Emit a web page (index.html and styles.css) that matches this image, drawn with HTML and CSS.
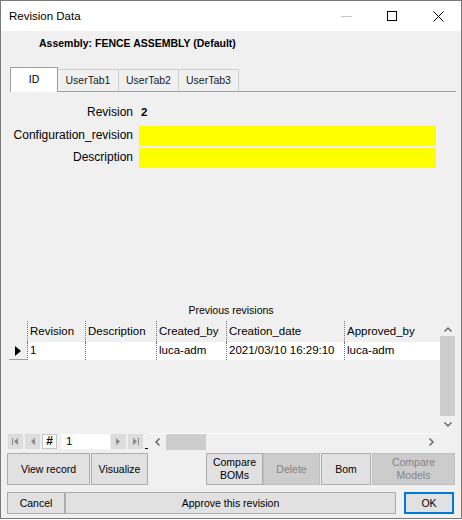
FILE: index.html
```html
<!DOCTYPE html>
<html>
<head>
<meta charset="utf-8">
<title>Revision Data</title>
<link rel="stylesheet" href="styles.css">
</head>
<body>
<div class="window">
  <div class="titlebar">
    <div class="title">Revision Data</div>
    <div class="controls">
      <div class="ctl"><svg width="11" height="10" viewBox="0 0 11 10"><line x1="0" y1="5.5" x2="11" y2="5.5" stroke="#c8c8c8" stroke-width="1"/></svg></div>
      <div class="ctl"><svg width="10" height="10" viewBox="0 0 10 10"><rect x="0.5" y="0.5" width="9" height="9" fill="none" stroke="#000" stroke-width="1"/></svg></div>
      <div class="ctl"><svg width="11" height="11" viewBox="0 0 11 11"><path d="M0.5,0.5 L10.5,10.5 M10.5,0.5 L0.5,10.5" stroke="#000" stroke-width="1" fill="none"/></svg></div>
    </div>
  </div>
  <div class="content">
    <div class="assembly">Assembly: FENCE ASSEMBLY (Default)</div>
    <div class="tabstrip">
      <div class="tab sel">ID</div>
      <div class="tab first">UserTab1</div>
      <div class="tab">UserTab2</div>
      <div class="tab">UserTab3</div>
    </div>
    <div class="form">
      <div class="lbl">Revision</div>
      <div class="val">2</div>
      <div class="lbl">Configuration_revision</div>
      <div class="field"></div>
      <div class="lbl">Description</div>
      <div class="field"></div>
    </div>
    <div class="caption">Previous revisions</div>
    <div class="grid">
      <div class="cells">
        <div class="row head">
          <div class="c rh"></div>
          <div class="c c1">Revision</div>
          <div class="c c2">Description</div>
          <div class="c c3">Created_by</div>
          <div class="c c4">Creation_date</div>
          <div class="c c5">Approved_by</div>
        </div>
        <div class="row data">
          <div class="c rh"><svg width="6" height="10" viewBox="0 0 6 10"><polygon points="0,0 6,5 0,10" fill="#000"/></svg></div>
          <div class="c c1">1</div>
          <div class="c c2"></div>
          <div class="c c3">luca-adm</div>
          <div class="c c4">2021/03/10 16:29:10</div>
          <div class="c c5">luca-adm</div>
        </div>
      </div>
      <div class="vscroll">
        <div class="varrow up"><svg width="8" height="5" viewBox="0 0 8 5"><polyline points="0.5,4.5 4,1 7.5,4.5" fill="none" stroke="#606060" stroke-width="1.4"/></svg></div>
        <div class="vthumb"></div>
        <div class="varrow down"><svg width="8" height="5" viewBox="0 0 8 5"><polyline points="0.5,0.5 4,4 7.5,0.5" fill="none" stroke="#606060" stroke-width="1.4"/></svg></div>
      </div>
    </div>
    <div class="navrow">
      <div class="nbtn"><svg width="15" height="15" viewBox="0 0 15 15"><rect x="4" y="4" width="1" height="7" fill="#8a8a8a"/><polygon points="10,4 6,7.5 10,11" fill="#8a8a8a"/></svg></div>
      <div class="nbtn gap2"><svg width="15" height="15" viewBox="0 0 15 15"><polygon points="10,4 6,7.5 10,11" fill="#8a8a8a"/></svg></div>
      <div class="hash">#</div>
      <div class="pos">1</div>
      <div class="nbtn next"><svg width="15" height="15" viewBox="0 0 15 15"><polygon points="5,4 9,7.5 5,11" fill="#8a8a8a"/></svg></div>
      <div class="nbtn gap2"><svg width="15" height="15" viewBox="0 0 15 15"><polygon points="5,4 9,7.5 5,11" fill="#8a8a8a"/><rect x="10" y="4" width="1" height="7" fill="#8a8a8a"/></svg></div>
      <div class="under"></div>
      <div class="hscroll">
        <div class="harrow"><svg width="5" height="8" viewBox="0 0 5 8"><polyline points="4.5,0.5 1,4 4.5,7.5" fill="none" stroke="#606060" stroke-width="1.4"/></svg></div>
        <div class="hthumb"></div>
        <div class="hspace"></div>
        <div class="harrow"><svg width="5" height="8" viewBox="0 0 5 8"><polyline points="0.5,0.5 4,4 0.5,7.5" fill="none" stroke="#606060" stroke-width="1.4"/></svg></div>
      </div>
      <div class="corner"></div>
    </div>
    <div class="btnrow">
      <div class="btn b-view">View record</div>
      <div class="btn b-vis">Visualize</div>
      <div class="btn b-cb">Compare<br>BOMs</div>
      <div class="btn dis b-del">Delete</div>
      <div class="btn b-bom">Bom</div>
      <div class="btn dis b-cm">Compare<br>Models</div>
    </div>
    <div class="bottomrow">
      <div class="btn b-cancel">Cancel</div>
      <div class="btn b-approve">Approve this revision</div>
      <div class="btn b-ok">OK</div>
    </div>
  </div>
</div>
</body>
</html>
```

FILE: styles.css
```css
* { box-sizing: border-box; }
html, body { margin: 0; padding: 0; background: #ffffff; }
body {
  font-family: "Liberation Sans", Arial, sans-serif;
  font-size: 12px;
  color: #000;
}
.window {
  width: 462px;
  height: 519px;
  border: 1px solid #7a7a7a;
  background: #f0f0f0;
  display: flex;
  flex-direction: column;
  overflow: hidden;
}
.titlebar {
  height: 30px;
  flex: none;
  background: #fff;
  display: flex;
  align-items: center;
}
.title {
  padding-left: 8px;
  font-size: 11.5px;
}
.controls {
  margin-left: auto;
  display: flex;
  height: 30px;
}
.ctl {
  width: 46px;
  height: 30px;
  display: flex;
  align-items: center;
  justify-content: center;
}
.content {
  flex: none;
  display: flex;
  flex-direction: column;
}
.assembly {
  height: 24px;
  padding: 5px 0 0 38px;
  font-weight: bold;
  font-size: 10.5px;
  line-height: 14px;
}
.tabstrip {
  margin: 12px 0 0 9px;
  width: 446px;
  height: 25px;
  border-bottom: 1px solid #a0a0a0;
  display: flex;
  align-items: flex-end;
}
.tab {
  width: 60px;
  height: 22px;
  border: 1px solid #cfcfcf;
  border-left: none;
  border-bottom: none;
  background: #f0f0f0;
  text-align: center;
  line-height: 20px;
  font-size: 10.5px;
  color: #1a1a1a;
}
.tab.first { width: 61px; }
.tab.sel {
  width: 48px;
  height: 25px;
  margin-bottom: -1px;
  border: 1px solid #a0a0a0;
  border-bottom: none;
  background: #fff;
  line-height: 22px;
  color: #000;
}
.form {
  margin-top: 11px;
  display: grid;
  grid-template-columns: 132px 297px;
  grid-template-rows: 21px 20px 20px;
  column-gap: 6px;
  row-gap: 2px;
}
.lbl {
  align-self: start;
  text-align: right;
  line-height: 18px;
  font-size: 12px;
  white-space: nowrap;
}
.val {
  align-self: start;
  line-height: 18px;
  padding-left: 2px;
  font-weight: bold;
  font-size: 11.5px;
}
.field { background: #ffff00; }
.caption {
  margin-top: 135px;
  height: 14px;
  line-height: 14px;
  text-align: center;
  font-size: 10.5px;
}
.grid {
  margin: 4px 0 0 8px;
  width: 446px;
  height: 112px;
  display: flex;
}
.cells { width: 431px; }
.row { display: flex; }
.row.head { height: 21px; line-height: 21px; background: #f0f0f0; }
.row.data { height: 18px; line-height: 17px; background: #fff; }
.c {
  height: 100%;
  border-right: 1px dotted #777;
  padding-left: 2px;
  font-size: 11.5px;
  white-space: nowrap;
  overflow: hidden;
}
.rh { width: 19px; background: #f0f0f0; padding-left: 0; }
.row.data .rh {
  border-bottom: 1px solid #a0a0a0;
  display: flex;
  align-items: center;
  padding-left: 6px;
}
.c1 { width: 58px; }
.c2 { width: 71px; }
.c3 { width: 70px; }
.c4 { width: 118px; }
.c5 { width: 95px; border-right: none; }
.vscroll {
  width: 15px;
  height: 112px;
  background: #f0f0f0;
  display: flex;
  flex-direction: column;
}
.varrow {
  display: flex;
  align-items: center;
  justify-content: center;
}
.varrow.up { height: 15px; padding-top: 2px; }
.varrow.down { flex: 1; }
.vthumb { height: 80px; background: #cdcdcd; }
.navrow {
  height: 17px;
  margin-left: 7px;
  display: flex;
  align-items: flex-start;
}
.nbtn {
  width: 15px;
  height: 15px;
  margin-top: 1px;
  background: #dcdcdc;
}
.nbtn svg { display: block; }
.gap2 { margin-left: 2px; }
.hash {
  margin: 1px 0 0 2px;
  width: 15px;
  height: 15px;
  background: #fff;
  border: 1px solid #c6c6c6;
  text-align: center;
  line-height: 13px;
  font-size: 12px;
  font-weight: bold;
}
.pos {
  margin: 1px 0 0 4px;
  width: 49px;
  height: 15px;
  background: #fff;
  line-height: 15px;
  padding-left: 5px;
  font-size: 11.5px;
}
.next { margin-left: 1px; }
.under {
  margin: 15px 0 0 2px;
  width: 3px;
  height: 1px;
  background: #000;
}
.hscroll {
  margin-left: 1px;
  width: 291px;
  height: 17px;
  border-top: 1px solid #fff;
  display: flex;
  background: #f0f0f0;
}
.harrow {
  width: 17px;
  display: flex;
  align-items: center;
  justify-content: center;
}
.hthumb { width: 40px; background: #cdcdcd; }
.hspace { flex: 1; }
.corner { width: 15px; height: 17px; background: #f0f0f0; }
.btnrow {
  margin-top: 3px;
  padding-left: 6px;
  height: 32px;
  display: flex;
}
.btn {
  height: 100%;
  border: 1px solid #adadad;
  background: #e1e1e1;
  display: flex;
  align-items: center;
  justify-content: center;
  text-align: center;
  font-size: 10.5px;
  line-height: 13px;
}
.btn.dis {
  background: #cccccc;
  border-color: #bfbfbf;
  color: #838383;
}
.b-view { width: 83px; }
.b-vis { width: 57px; margin-left: 1px; }
.b-cb { width: 57px; margin-left: 58px; }
.b-del { width: 57px; }
.b-bom { width: 50px; margin-left: 1px; }
.b-cm { width: 83px; margin-left: 1px; }
.bottomrow {
  margin-top: 7px;
  padding-left: 6px;
  height: 22px;
  display: flex;
}
.b-cancel { width: 58px; }
.b-approve { width: 331px; }
.b-ok {
  width: 50px;
  margin-left: 8px;
  border: 2px solid #0078d7;
}
```
